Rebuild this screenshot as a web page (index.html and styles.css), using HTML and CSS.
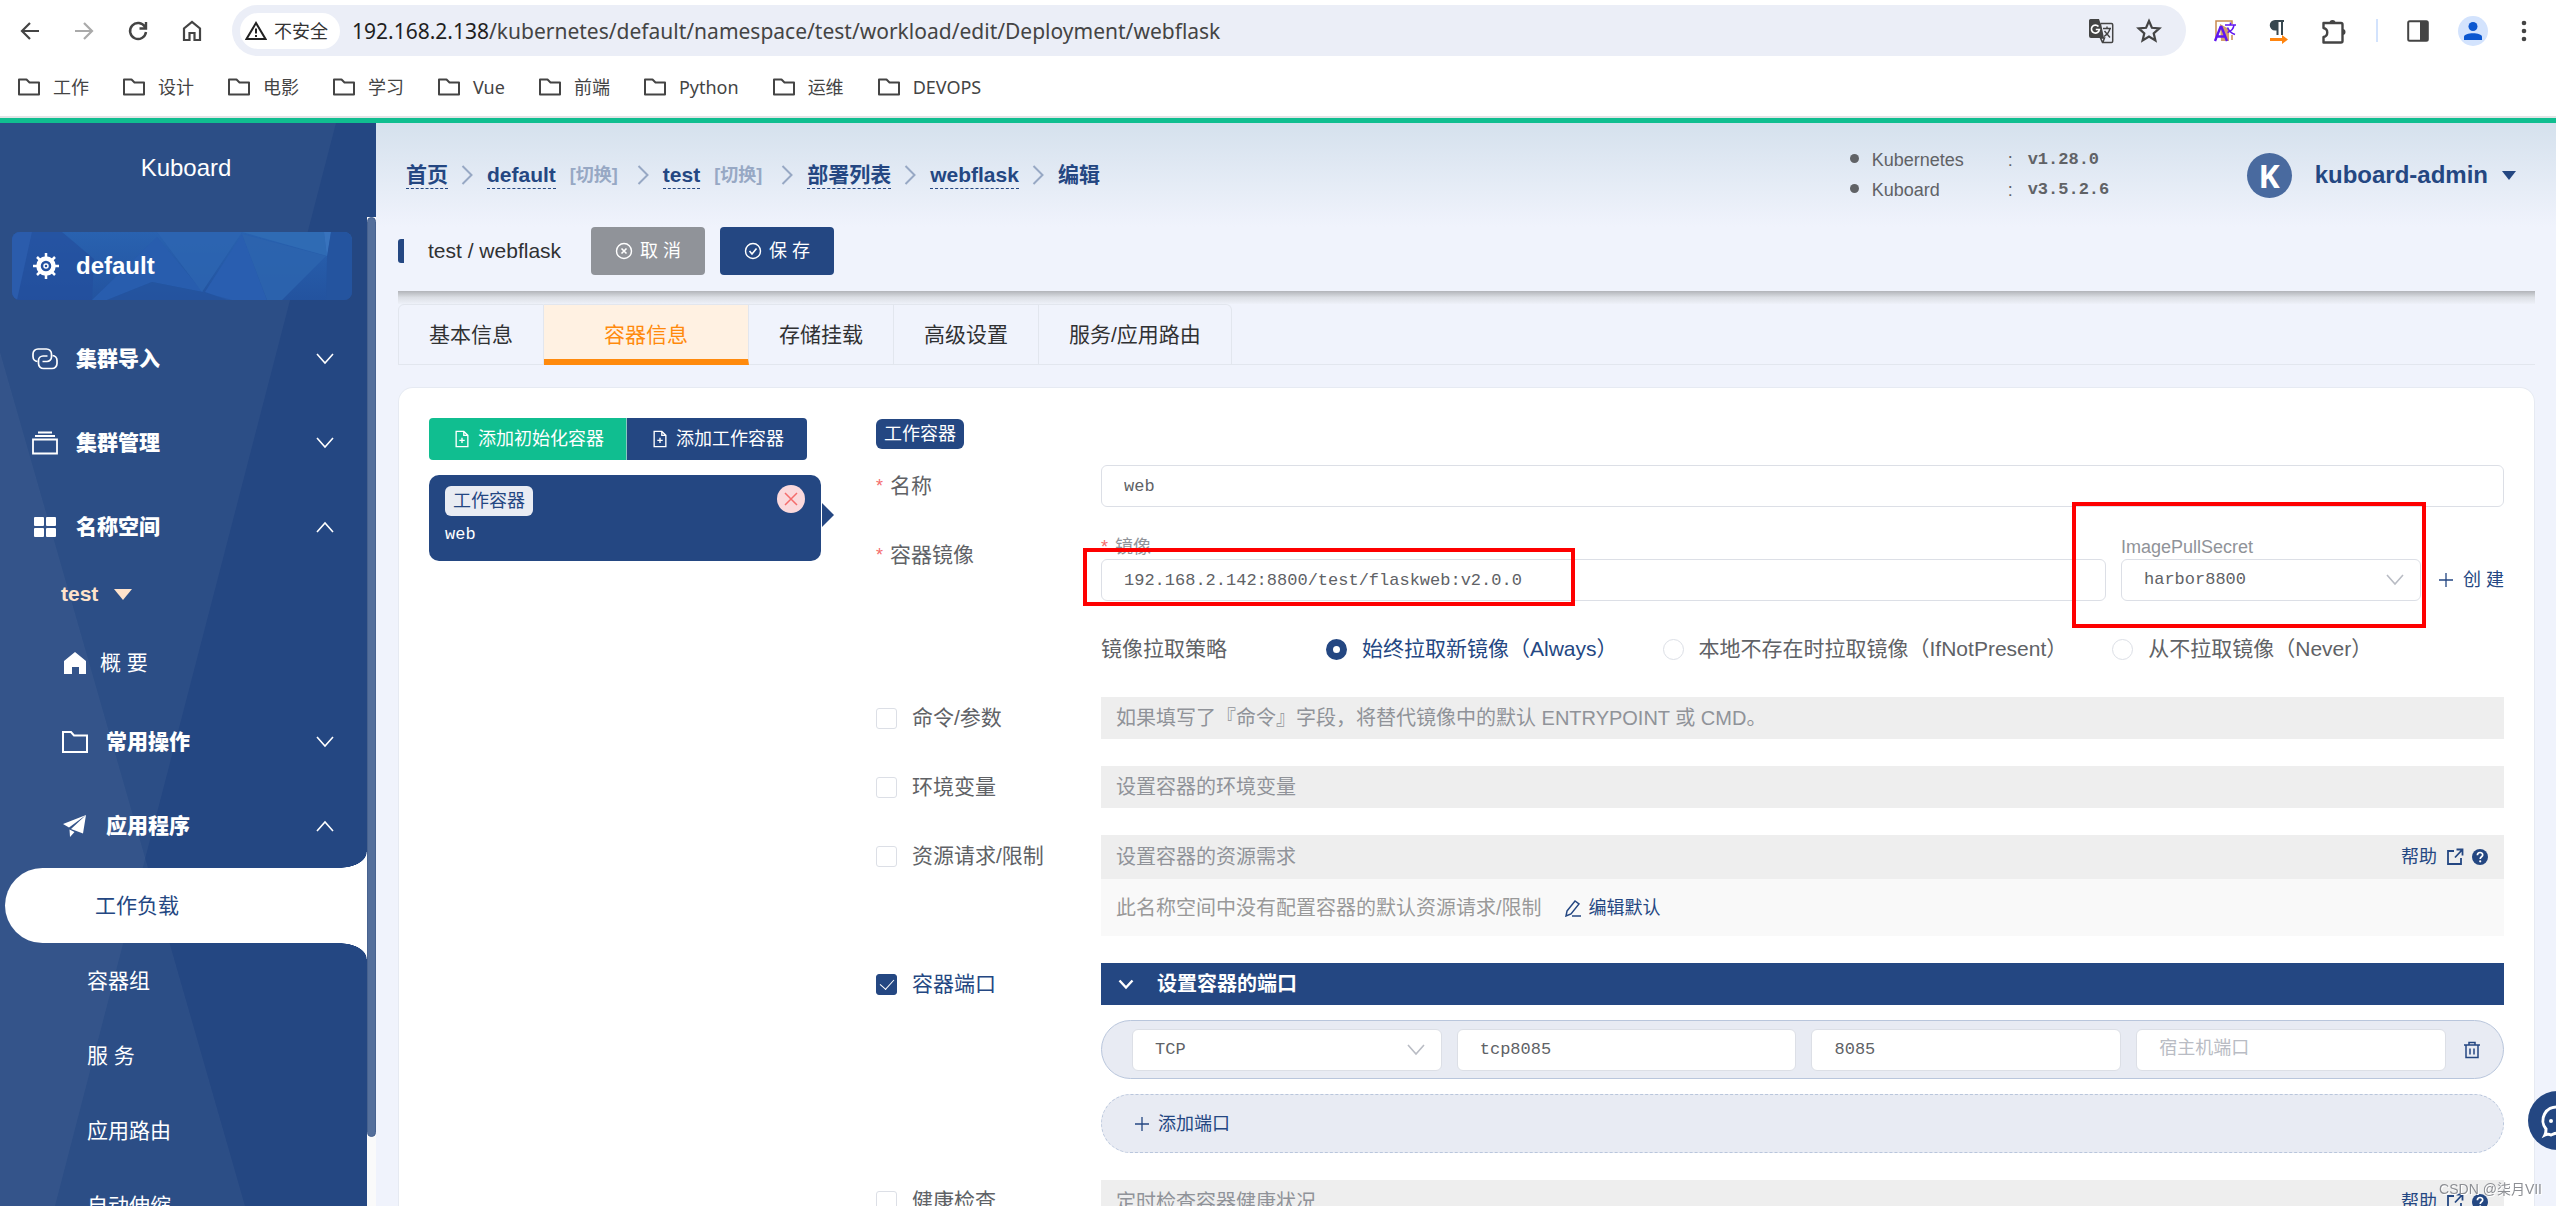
FILE: index.html
```html
<!DOCTYPE html>
<html lang="zh-CN">
<head>
<meta charset="utf-8">
<title>Kuboard</title>
<link rel="stylesheet" href="styles.css">
</head>
<body>
<svg class="sprite" aria-hidden="true">
  <symbol id="folder" viewBox="0 0 24 20"><path d="M2 17.5V2.500h7.500l3 3H22v12z" fill="none" stroke="currentColor" stroke-width="2" stroke-linejoin="round"/></symbol>
  <symbol id="down" viewBox="0 0 18 12"><path d="M1 1l8 9 8-9" fill="none" stroke="currentColor" stroke-width="1.6"/></symbol>
  <symbol id="up" viewBox="0 0 18 12"><path d="M1 11l8-9 8 9" fill="none" stroke="currentColor" stroke-width="1.600"/></symbol>
  <symbol id="next" viewBox="0 0 12 20"><path d="M1.500 1l9 9-9 9" fill="none" stroke="currentColor" stroke-width="2"/></symbol>
  <symbol id="fileadd" viewBox="0 0 16 20"><path d="M1.500 1.500h8.500l4.500 4.500v12.500h-13zM10 1.500V6h4.500M8 8.500v6M5 11.500h6" fill="none" stroke="currentColor" stroke-width="1.500"/></symbol>
  <symbol id="plus" viewBox="0 0 16 16"><path d="M8 1v14M1 8h14" fill="none" stroke="currentColor" stroke-width="1.300"/></symbol>
  <symbol id="external" viewBox="0 0 18 18"><path d="M8 3H2v13h13v-6M10.500 1.500H16.500V7.500M16 2L9 9.500" fill="none" stroke="currentColor" stroke-width="1.800"/></symbol>
  <symbol id="question" viewBox="0 0 18 18"><circle cx="9" cy="9" r="8" fill="currentColor"/><path d="M6.400 7.200c0-3.600 5.300-3.500 5.300-.3 0 1.800-2.500 1.900-2.500 4" fill="none" stroke="#fff" stroke-width="1.700"/><circle cx="9.200" cy="13.300" r="1.100" fill="#fff"/></symbol>
</svg>

<header class="browser">
  <div class="toolbar">
    <div class="nav-buttons">
      <button aria-label="后退"><svg width="22" height="22" viewBox="0 0 22 22"><path d="M20 11H3M11 3l-8 8 8 8" fill="none" stroke="#444" stroke-width="2.200"/></svg></button>
      <button aria-label="前进"><svg width="22" height="22" viewBox="0 0 22 22"><path d="M2 11h17M11 3l8 8-8 8" fill="none" stroke="#aaa" stroke-width="2.200"/></svg></button>
      <button aria-label="刷新"><svg width="22" height="22" viewBox="0 0 22 22"><path d="M18 7a8 8 0 1 0 1 5M19 2v6.500h-6.500" fill="none" stroke="#444" stroke-width="2.400"/></svg></button>
      <button aria-label="主页"><svg width="22" height="22" viewBox="0 0 22 22"><path d="M3 20V8.500L11 2l8 6.500V20h-5.500v-7h-5v7z" fill="none" stroke="#444" stroke-width="2.200"/></svg></button>
    </div>
    <div class="address">
      <span class="chip"><svg width="22" height="20" viewBox="0 0 22 20"><path d="M11 2L1.500 18h19zM11 7.500v5M11 14v2" fill="none" stroke="#222" stroke-width="2"/></svg>不安全</span>
      <span class="url"><b>192.168.2.138</b>/kubernetes/default/namespace/test/workload/edit/Deployment/webflask</span>
      <svg width="26" height="26" viewBox="0 0 26 26"><path d="M2.500 1h8.500l1.500 4.500H14L17 20H13l-.5 0H3a2 2 0 0 1-2-2V2.500A1.500 1.500 0 0 1 2.500 1z" fill="#444"/><path d="M13 5.500h10.500a1.200 1.200 0 0 1 1.200 1.200v16.500a1.200 1.200 0 0 1-1.200 1.200H15l4-4.500h-3z" fill="#ebeef7"/><path d="M12.500 5.500h11a1.200 1.200 0 0 1 1.200 1.200v16.500a1.200 1.200 0 0 1-1.200 1.200H14.500L12.500 20h4l-1.500 4" fill="none" stroke="#444" stroke-width="1.500"/><path d="M10.500 8.500a4 4 0 1 0 .9 3H7.800" fill="none" stroke="#fff" stroke-width="1.700"/><path d="M15 10.500h8M19 8.500v2M22 10.500c-1 4-3.500 6.500-6 8M16.500 13l5.500 6.500" fill="none" stroke="#444" stroke-width="1.400"/></svg>
      <svg width="26" height="26" viewBox="0 0 26 26"><path d="M13 3l2.900 6.800 7.400.6-5.600 4.900 1.700 7.200-6.400-3.900-6.400 3.900 1.700-7.200-5.600-4.900 7.400-.6z" fill="none" stroke="#444" stroke-width="2.200"/></svg>
    </div>
    <div class="extensions">
      <svg width="26" height="26" viewBox="0 0 26 26"><path d="M4 22V3h16v3M20 17v5" fill="none" stroke="#c88a50" stroke-width="1.500"/><path d="M8 6l9 5v12H9z" fill="#d2a06b"/><path d="M3 23L8.500 9h1L15 23M5 18.500h8" fill="none" stroke="#5f16f0" stroke-width="2.400"/><path d="M13 7h11M18.500 4.500V7M22 7c-.5 4-3.500 6.500-6.500 7.500M15.500 9.500c1.500 4 4.500 6 7.500 7" fill="none" stroke="#5f16f0" stroke-width="1.600"/></svg>
      <svg width="26" height="26" viewBox="0 0 26 26"><path d="M18 2H9a5 5 0 0 0 0 10.500h1.500V17h2V4H15v13h2V4h1z" fill="#37474f"/><path d="M4 20h12v-3l6 4.500-6 4.500v-3H4z" fill="#ff850f"/></svg>
      <svg width="28" height="28" viewBox="0 0 28 28"><path d="M3.500 6h17.500a1.500 1.500 0 0 1 1.500 1.500V24a1.500 1.500 0 0 1-1.500 1.500H3.500V20c5-1 5-8 0-9z" fill="none" stroke="#444" stroke-width="2.400" stroke-linejoin="round"/><path d="M9.500 6a3 3 0 0 1 6 0zM22.500 12a3 3 0 0 1 0 6z" fill="#444"/></svg>
      <i class="bar"></i>
      <svg width="24" height="24" viewBox="0 0 24 24"><rect x="2.200" y="2.200" width="19.600" height="19.600" rx="1.500" fill="none" stroke="#444" stroke-width="2"/><path d="M14 2h8v20h-8z" fill="#444"/></svg>
      <svg width="30" height="30" viewBox="0 0 30 30"><circle cx="15" cy="15" r="15" fill="#d3e3fd"/><circle cx="15" cy="10.500" r="4.500" fill="#0b57d0"/><path d="M6 24v-3c0-5 18-5 18 0v3z" fill="#0b57d0"/></svg>
      <svg width="16" height="26" viewBox="0 0 16 26"><g fill="#444"><circle cx="8" cy="5" r="2.300"/><circle cx="8" cy="13" r="2.300"/><circle cx="8" cy="21" r="2.300"/></g></svg>
    </div>
  </div>
  <nav class="bookmarks">
    <a href="#"><svg><use href="#folder"/></svg>工作</a>
    <a href="#"><svg><use href="#folder"/></svg>设计</a>
    <a href="#"><svg><use href="#folder"/></svg>电影</a>
    <a href="#"><svg><use href="#folder"/></svg>学习</a>
    <a href="#"><svg><use href="#folder"/></svg>Vue</a>
    <a href="#"><svg><use href="#folder"/></svg>前端</a>
    <a href="#"><svg><use href="#folder"/></svg>Python</a>
    <a href="#"><svg><use href="#folder"/></svg>运维</a>
    <a href="#"><svg><use href="#folder"/></svg>DEVOPS</a>
  </nav>
</header>

<div class="app">
  <aside class="sidebar">
    <svg class="facets" viewBox="0 0 376 1083" preserveAspectRatio="none" aria-hidden="true"><path d="M0 0h336L55 1083H0z" fill="#fff" fill-opacity=".04"/><path d="M0 229L245 1083H0z" fill="#fff" fill-opacity=".04"/></svg>
    <div class="brand">Kuboard</div>
    <div class="side-body">
      <nav class="menu">
        <a class="cluster" href="#">
          <svg class="cluster-art" viewBox="0 0 340 68" preserveAspectRatio="none" aria-hidden="true"><defs><linearGradient id="sky" x1="0" y1="0" x2="0" y2="1"><stop offset="0" stop-color="#2962b0"/><stop offset="1" stop-color="#23539f"/></linearGradient></defs><path d="M0 0h340v68H0z" fill="url(#sky)"/><path d="M0 0h50l32 27-2 41H0z" fill="#234f9c" fill-opacity=".7"/><path d="M20 0L5 68H0V0z" fill="#2b5cac"/><path d="M145 5l46 55-51-10-45 18-15 0z" fill="#285dae"/><path d="M145 0h85l-40 60z" fill="#2d65b2" fill-opacity=".8"/><path d="M230 2l25 66h-40l-22-8z" fill="#295eb0"/><path d="M230 2l84 22-44 44h-15z" fill="#2c64ae" fill-opacity=".9"/><path d="M230 0h82l3 24z" fill="#2f6bb4"/><path d="M312 0h7l-4 25z" fill="#3873bd"/><path d="M319 0h21v68h-26l1-43z" fill="#24549f"/><path d="M140 50l50 10 30 8H95z" fill="#25549f" fill-opacity=".6"/></svg>
          <svg class="ico" width="28" height="28" viewBox="0 0 28 28"><g stroke="#fff" fill="none"><circle cx="14" cy="14" r="7.500" stroke-width="4.500"/><circle cx="14" cy="14" r="2" stroke-width="1.500"/><path d="M14 1v5M14 22v5M1 14h5M22 14h5M5 5l3.500 3.500M19.500 19.500L23 23M23 5l-3.500 3.500M8.500 19.500L5 23" stroke-width="2.500"/></g></svg>
          <span>default</span>
        </a>
        <a class="group" href="#"><svg class="ico" width="28" height="24" viewBox="0 0 28 24"><g fill="none" stroke="#fff" stroke-width="1.700"><path d="M6.500 14.500A5 5 0 0 1 2 9.500V7a5 5 0 0 1 5-5h8.500a5 5 0 0 1 5 5v3a4.500 4.500 0 0 1-4.500 4.500h-4.500"/><path d="M21.500 8.500a5 5 0 0 1 4.500 5V16.500a5 5 0 0 1-5 5h-8.500a5 5 0 0 1-5-5v-3A4.500 4.500 0 0 1 12 9h4.500"/></g></svg><span>集群导入</span><svg class="arrow"><use href="#down"/></svg></a>
        <a class="group" href="#"><svg class="ico" width="28" height="24" viewBox="0 0 28 24"><path d="M2 8.500h24v14H2zM4 5h20M7 1.500h14" fill="none" stroke="#fff" stroke-width="1.800"/></svg><span>集群管理</span><svg class="arrow"><use href="#down"/></svg></a>
        <a class="group" href="#"><svg class="ico" width="28" height="24" viewBox="0 0 28 24"><g fill="#fff"><rect x="3" y="2" width="10" height="9" rx="1"/><rect x="15" y="2" width="10" height="9" rx="1"/><rect x="3" y="13" width="10" height="9" rx="1"/><rect x="15" y="13" width="10" height="9" rx="1"/></g></svg><span>名称空间</span><svg class="arrow"><use href="#up"/></svg></a>
        <a class="namespace" href="#"><span>test</span><svg width="18" height="11" viewBox="0 0 18 11"><path d="M0 0h18L9 11z" fill="#ffe3cb"/></svg></a>
        <a class="overview" href="#"><svg class="ico" width="28" height="24" viewBox="0 0 28 24"><path d="M14 1l11 9v13h-7v-7h-7v7H3V10z" fill="#fff"/></svg><span>概 要</span></a>
        <a class="group nested" href="#"><svg class="ico" width="28" height="24" viewBox="0 0 28 24"><path d="M2 22V2h8l3 3.500h13V22z" fill="none" stroke="#fff" stroke-width="2"/></svg><span>常用操作</span><svg class="arrow"><use href="#down"/></svg></a>
        <a class="group nested" href="#"><svg class="ico" width="28" height="24" viewBox="0 0 28 24"><path d="M25 1L2 10l6 3.500zM25 1L10 15l12 4.500zM8.500 15.500l5 2.500L9 23z" fill="#fff"/></svg><span>应用程序</span><svg class="arrow"><use href="#up"/></svg></a>
        <a class="leaf current" href="#">工作负载</a>
        <a class="leaf" href="#">容器组</a>
        <a class="leaf" href="#">服 务</a>
        <a class="leaf" href="#">应用路由</a>
        <a class="leaf" href="#">自动伸缩</a>
      </nav>
      <div class="track"><div class="thumb"></div></div>
    </div>
  </aside>

  <main class="main">
    <div class="topline">
      <nav class="crumbs">
        <a href="#">首页</a><svg class="sep"><use href="#next"/></svg>
        <a href="#">default</a><button class="switch">[切换]</button><svg class="sep after"><use href="#next"/></svg>
        <a href="#">test</a><button class="switch">[切换]</button><svg class="sep after"><use href="#next"/></svg>
        <a href="#">部署列表</a><svg class="sep"><use href="#next"/></svg>
        <a href="#">webflask</a><svg class="sep"><use href="#next"/></svg>
        <span>编辑</span>
      </nav>
      <ul class="versions">
        <li><span>Kubernetes</span><span>:</span><b>v1.28.0</b></li>
        <li><span>Kuboard</span><span>:</span><b>v3.5.2.6</b></li>
      </ul>
      <button class="user"><span class="avatar">K</span>kuboard-admin<svg width="14" height="9" viewBox="0 0 14 9"><path d="M0 0h14L7 9z" fill="#244782"/></svg></button>
    </div>

    <div class="titlebar">
      <h1>test / webflask</h1>
      <button class="btn cancel"><svg width="18" height="18" viewBox="0 0 18 18"><circle cx="9" cy="9" r="7.500" fill="none" stroke="#fff" stroke-width="1.400"/><path d="M6.500 6.500l5 5M11.500 6.500l-5 5" stroke="#fff" stroke-width="1.600"/></svg>取 消</button>
      <button class="btn save"><svg width="18" height="18" viewBox="0 0 18 18"><circle cx="9" cy="9" r="7.500" fill="none" stroke="#fff" stroke-width="1.400"/><path d="M5.500 9l2.500 3 4.500-5.500" fill="none" stroke="#fff" stroke-width="1.600"/></svg>保 存</button>
    </div>

    <div class="tabs" role="tablist">
      <button role="tab">基本信息</button>
      <button role="tab" class="active" aria-selected="true">容器信息</button>
      <button role="tab">存储挂载</button>
      <button role="tab">高级设置</button>
      <button role="tab">服务/应用路由</button>
    </div>

    <section class="panel">
      <div class="containers">
        <div class="adders">
          <button class="add-init"><svg><use href="#fileadd"/></svg>添加初始化容器</button>
          <button class="add-work"><svg><use href="#fileadd"/></svg>添加工作容器</button>
        </div>
        <div class="container-card">
          <span class="tag light">工作容器</span>
          <span class="cname">web</span>
          <button class="remove" aria-label="删除"><svg width="14" height="14" viewBox="0 0 14 14"><path d="M1 1l12 12M13 1L1 13" stroke="#f56c6c" stroke-width="1.500"/></svg></button>
        </div>
      </div>

      <form class="form">
        <div class="form-head"><span class="tag">工作容器</span></div>
        <div class="row">
          <label class="label required" for="cname">名称</label>
          <input class="input" id="cname" value="web">
        </div>
        <div class="row">
          <label class="label required" for="image">容器镜像</label>
          <div class="image-block">
            <div class="image-line">
              <div class="field image">
                <label class="sub required" for="image">镜像</label>
                <input class="input" id="image" value="192.168.2.142:8800/test/flaskweb:v2.0.0">
                <i class="mark mark-image"></i>
              </div>
              <div class="field secret">
                <label class="sub" for="secret">ImagePullSecret</label>
                <span class="select"><select class="input" id="secret"><option>harbor8800</option></select><svg><use href="#down"/></svg></span>
                <i class="mark mark-secret"></i>
              </div>
              <button type="button" class="link create"><svg class="plus"><use href="#plus"/></svg>创 建</button>
            </div>
            <div class="policy">
              <span>镜像拉取策略</span>
              <label><input type="radio" name="policy" checked><span>始终拉取新镜像（Always）</span></label>
              <label><input type="radio" name="policy"><span>本地不存在时拉取镜像（IfNotPresent）</span></label>
              <label><input type="radio" name="policy"><span>从不拉取镜像（Never）</span></label>
            </div>
          </div>
        </div>
        <div class="row">
          <label class="label check"><input type="checkbox">命令/参数</label>
          <div class="hint">如果填写了『命令』字段，将替代镜像中的默认 ENTRYPOINT 或 CMD。</div>
        </div>
        <div class="row">
          <label class="label check"><input type="checkbox">环境变量</label>
          <div class="hint">设置容器的环境变量</div>
        </div>
        <div class="row">
          <label class="label check"><input type="checkbox">资源请求/限制</label>
          <div>
            <div class="hint tall">设置容器的资源需求<a class="link help" href="#">帮助<svg><use href="#external"/></svg><svg><use href="#question"/></svg></a></div>
            <div class="note">此名称空间中没有配置容器的默认资源请求/限制<a class="link" href="#"><svg width="18" height="18" viewBox="0 0 18 18"><path d="M3 12L11 2l4 3-8 10-5 2zM8 17h9" fill="none" stroke="currentColor" stroke-width="1.500"/></svg>编辑默认</a></div>
          </div>
        </div>
        <div class="row">
          <label class="label check on"><input type="checkbox" checked>容器端口</label>
          <div class="ports">
            <div class="ports-head"><svg width="16" height="11" viewBox="0 0 16 11"><path d="M1.500 1.500L8 8.500l6.500-7" fill="none" stroke="#fff" stroke-width="2.400"/></svg>设置容器的端口</div>
            <div class="port">
              <span class="select"><select class="input" aria-label="协议"><option>TCP</option></select><svg><use href="#down"/></svg></span>
              <input class="input" aria-label="端口名称" value="tcp8085">
              <input class="input" aria-label="容器端口" value="8085">
              <input class="input" aria-label="宿主机端口" placeholder="宿主机端口">
              <button type="button" class="link trash" aria-label="删除端口"><svg width="18" height="18" viewBox="0 0 18 18"><path d="M1 4h16M6 4V1.500h6V4M3 4v12.500h12V4M7 7.500v6M11 7.500v6" fill="none" stroke="currentColor" stroke-width="1.500"/></svg></button>
            </div>
            <button type="button" class="link add-port"><svg class="plus"><use href="#plus"/></svg>添加端口</button>
          </div>
        </div>
        <div class="row">
          <label class="label check"><input type="checkbox">健康检查</label>
          <div class="hint tall">定时检查容器健康状况<a class="link help" href="#">帮助<svg><use href="#external"/></svg><svg><use href="#question"/></svg></a></div>
        </div>
      </form>
    </section>
  </main>
</div>

<button class="chat" aria-label="反馈"><svg width="36" height="36" viewBox="0 0 36 36"><path d="M18 4a14 13 0 0 1 0 26c-3 0-5 1-7 2-2-1-4-1-6 0 1-2 1-4 1-6A13.500 13.500 0 0 1 18 4z" fill="none" stroke="#fff" stroke-width="3"/><g fill="#fff"><circle cx="11" cy="18" r="2"/><circle cx="18" cy="18" r="2"/><circle cx="25" cy="18" r="2"/></g></svg></button>
<div class="watermark">CSDN @柒月VII</div>
</body>
</html>
```
FILE: styles.css
```css
* { box-sizing: border-box; }
:root {
  --blue: #244782;
  --line: #dcdfe6;
  --sans: "Liberation Sans", "Noto Sans CJK SC", sans-serif;
  --mono: "Liberation Mono", "Noto Sans CJK SC", monospace;
}
body { margin: 0; height: 100vh; overflow: hidden; display: flex; flex-direction: column; font: 21px/32px var(--sans); color: #606266; background: #f0f3fc; }
button, input, select { font: inherit; color: inherit; margin: 0; }
button { border: 0; background: none; padding: 0; display: flex; align-items: center; }
a { color: inherit; text-decoration: none; }
svg { flex: none; display: block; }
.sprite { position: absolute; width: 0; height: 0; }

/* Browser chrome */
.browser { flex: none; background: #fff; border-bottom: 2px solid #e2e4e6; padding-top: 5px; font-family: "Noto Sans", "Noto Sans CJK SC", sans-serif; color: #444; }
.toolbar { display: flex; align-items: center; height: 51px; }
.nav-buttons { display: flex; gap: 32px; width: 232px; padding-left: 19px; }
.address { flex: 1; height: 51px; border-radius: 26px; background: #ebeef7; display: flex; align-items: center; gap: 22px; padding: 0 24px 0 8px; }
.chip { height: 36px; border-radius: 18px; background: #fff; display: flex; align-items: center; gap: 7px; padding: 0 12px 0 5px; font-size: 18px; color: #333; margin-right: -10px; }
.url { flex: 1; font-size: 21px; white-space: nowrap; }
.url b { font-weight: 400; color: #1f1f1f; }
.extensions { display: flex; align-items: center; gap: 28px; padding: 0 24px 0 26px; }
.bar { width: 2px; height: 23px; background: #d3e3fd; }
.bookmarks { display: flex; gap: 33px; height: 60px; align-items: center; padding: 2px 18px 0 17px; font-size: 18px; }
.bookmarks a { display: flex; align-items: center; gap: 12px; }
.bookmarks svg { width: 24px; height: 20px; }

.app { flex: 1; min-height: 0; border-top: 5px solid #10be90; display: flex; }

/* Sidebar */
.sidebar { position: relative; flex: none; width: 376px; background: var(--blue); color: #fff; display: flex; flex-direction: column; }
.facets { position: absolute; inset: 0; width: 100%; height: 100%; }
.brand { position: relative; flex: none; height: 94px; line-height: 90px; font-size: 24px; text-align: center; padding-right: 4px; }
.side-body { position: relative; flex: 1; min-height: 0; display: flex; }
.menu { flex: 1; min-width: 0; overflow: hidden; padding-top: 15px; }
.menu > a { display: flex; align-items: center; }
.menu .cluster { position: relative; height: 68px; margin: 0 15px 17px 12px; padding: 0 20px; gap: 16px; border-radius: 8px; overflow: hidden; font-weight: 900; font-size: 24px; }
.cluster span, .cluster .ico { position: relative; }
.cluster-art { position: absolute; inset: 0; width: 100%; height: 100%; }
.group { height: 84px; padding: 0 33px 0 31px; gap: 17px; font-weight: 900; }
.group span { flex: 1; }
.group.nested { padding-left: 61px; }
.arrow { width: 18px; height: 12px; }
.namespace { height: 50px; margin-bottom: 6px; padding-left: 61px; gap: 16px; font-size: 21px; font-weight: 700; color: #ffe3cb; }
.overview { height: 75px; padding-left: 61px; gap: 11px; }
.leaf { height: 75px; padding-left: 87px; }
.leaf.current { position: relative; margin-left: 5px; padding-left: 90px; border-radius: 38px 0 0 38px; background: #fff; color: var(--blue); }
.current::before, .current::after { content: ""; position: absolute; right: 0; width: 27px; height: 16px; }
.current::before { bottom: 100%; background: radial-gradient(27px 16px at 0 0, transparent 97%, #fff 100%); }
.current::after { top: 100%; background: radial-gradient(27px 16px at 0 100%, transparent 97%, #fff 100%); }
.track { width: 9px; background: #fafafa; }
.thumb { height: 93%; border-radius: 5px; background: #546f9b; border: 1px solid #47628f; }

/* Page head */
.main { flex: 1; min-width: 0; padding: 0 21px 0 22px; background: linear-gradient(#d5e1ed, #f0f3fc 104px); display: flex; flex-direction: column; }
.topline { flex: none; display: flex; align-items: center; height: 104px; padding: 0 19px 0 8px; color: var(--blue); }
.crumbs { flex: 1; display: flex; align-items: center; font-weight: 700; white-space: nowrap; }
.crumbs > a { line-height: 26px; border-bottom: 1px dashed; }
.sep { width: 12px; height: 20px; margin: 0 14px 0 13px; color: #97a8c4; }
.sep.after { margin-left: 19px; }
.switch { margin-left: 14px; font-size: 18px; color: #97a8c4; }
.versions { margin: 0 123px 0 0; padding: 0; list-style: none; font-size: 18px; line-height: 30px; color: #606266; }
.versions li { position: relative; display: grid; grid-template-columns: 136px 20px 96px; }
.versions li::before { content: ""; position: absolute; left: -22px; top: 9px; width: 9px; height: 9px; border-radius: 50%; background: #606266; }
.versions b { font: 700 17px/30px var(--mono); }
.user { font-size: 24px; font-weight: 700; gap: 14px; }
.avatar { width: 45px; height: 45px; margin-right: 9px; border-radius: 50%; background: #496a9f; color: #fff; font: 700 32px/45px "Noto Sans", sans-serif; text-align: center; }

.titlebar { flex: none; height: 64px; display: flex; align-items: center; padding-bottom: 16px; gap: 15px; position: relative; }
.titlebar::after { content: ""; position: absolute; left: 0; right: 0; top: 100%; height: 13px; background: linear-gradient(#b2b4b9, #dcdfe5 50%, #eef1f9); }
.titlebar h1 { margin: 0 15px 0 0; padding-left: 24px; border-left: 6px solid var(--blue); border-radius: 3px; font-size: 21px; line-height: 24px; font-weight: 400; color: #303133; }
.btn { height: 48px; padding: 0 24px; gap: 7px; border-radius: 4px; color: #fff; font-size: 18px; }
.cancel { background: #909399; }
.save { background: var(--blue); }

.tabs { flex: none; display: flex; height: 61px; margin-top: 13px; border-bottom: 1px solid #e2e6ee; position: relative; }
.tabs button { height: 61px; padding: 0 30px; border: solid #e2e6ee; border-width: 1px 1px 1px 0; color: #303133; }
.tabs button:first-child { border-left-width: 1px; border-top-left-radius: 6px; }
.tabs button:last-child { border-top-right-radius: 6px; }
.tabs .active { padding: 5px 60px 0; background: #fff1e2; color: #ff8a0d; border-bottom: 6px solid #ff8a0d; }

/* Panel */
.panel { flex: 1; min-height: 0; overflow: hidden; margin-top: 22px; border: 1px solid #e6eaf2; border-bottom: 0; border-radius: 15px 15px 0 0; background: #fff; padding: 30px; display: flex; align-items: flex-start; gap: 55px; }
.containers { flex: none; width: 392px; }
.adders { display: flex; color: #fff; font-size: 18px; }
.adders button { height: 42px; padding: 0 23px 0 24px; gap: 7px; background: var(--blue); border-radius: 0 4px 4px 0; }
.adders .add-init { padding-right: 22px; background: #10be90; border-right: 1px solid #88c8c0; border-radius: 4px 0 0 4px; }
.adders svg { width: 18px; height: 18px; }
.container-card { position: relative; margin-top: 15px; height: 86px; padding: 11px 16px; border-radius: 10px; background: var(--blue); color: #fff; display: flex; flex-direction: column; align-items: flex-start; gap: 4px; }
.container-card::after { content: ""; position: absolute; left: calc(100% + 1px); top: 28px; border: solid transparent; border-width: 12px 0 12px 12px; border-left-color: var(--blue); }
.tag { display: block; width: max-content; height: 30px; padding: 0 8px; border-radius: 6px; font-size: 18px; line-height: 30px; background: var(--blue); color: #fff; }
.tag.light { background: #e9ecf3; color: var(--blue); }
.cname { font: 17px/30px var(--mono); }
.remove { position: absolute; right: 16px; top: 10px; width: 28px; height: 28px; border-radius: 50%; background: #fbd9dc; justify-content: center; }

.form { flex: 1; min-width: 0; display: grid; gap: 27px; }
.form-head { height: 20px; padding-top: 1px; }
.row { display: grid; grid-template-columns: 225px 1fr; align-items: start; }
.label { height: 42px; display: flex; align-items: center; }
.required::before { content: "*"; color: #f56c6c; font-size: 18px; margin-right: 7px; }
.input { width: 100%; height: 42px; border: 1px solid var(--line); border-radius: 6px; background: #fff; padding: 0 22px; font: 17px/24px var(--mono); color: #606266; outline: 0; appearance: none; }
.input::placeholder { color: #b9bcc4; font-size: 18px; }
.select { display: block; position: relative; }
.select svg { position: absolute; right: 17px; top: 15px; width: 18px; height: 12px; color: #b9bcc4; pointer-events: none; }
.image-block { display: grid; gap: 27px; }
.image-line { display: flex; align-items: flex-end; gap: 15px; }
.field { position: relative; }
.field.image { flex: 1; }
.field.secret { width: 300px; }
.sub { display: block; height: 25px; font-size: 18px; line-height: 26px; color: #909399; }
.link { color: var(--blue); font-size: 18px; }
.create { height: 42px; gap: 9px; margin-left: 2px; }
.plus { width: 16px; height: 16px; }
.mark { position: absolute; border: 4px solid #fe0000; pointer-events: none; }
.mark-image { left: -18px; top: 14px; width: 492px; height: 58px; }
.mark-secret { left: -49px; top: -32px; width: 354px; height: 126px; }
.policy { display: flex; height: 42px; align-items: center; white-space: nowrap; }
.policy > span { width: 225px; }
.policy label { display: flex; align-items: center; gap: 15px; margin-right: 45px; }
.policy input { appearance: none; width: 21px; height: 21px; border: 1px solid var(--line); border-radius: 50%; background: #fff; }
.policy input:checked { border: 7px solid var(--blue); }
.policy input:checked + span, .check.on { color: var(--blue); }
.check { gap: 15px; }
.check input { appearance: none; width: 21px; height: 21px; border: 1px solid var(--line); border-radius: 3px; display: grid; place-items: center; }
.check input:checked { background: var(--blue); border-color: var(--blue); }
.check input:checked::before { content: ""; width: 7px; height: 12px; margin-top: -3px; border: solid #fff; border-width: 0 1px 1px 0; transform: rotate(42deg); }
.hint { height: 42px; background: #eee; color: #909399; padding: 0 15px; display: flex; align-items: center; font-size: 20px; }
.hint.tall { height: 44px; }
.help { margin-left: auto; display: flex; align-items: center; gap: 7px; }
.help svg { width: 18px; height: 18px; }
.help svg:first-of-type { margin-left: 2px; }
.note { height: 57px; background: #f9f9f9; color: #999; padding: 0 15px; display: flex; align-items: center; gap: 22px; font-size: 20px; }
.note a { display: flex; align-items: center; gap: 7px; }
.ports { display: grid; gap: 15px; }
.ports-head { height: 42px; background: var(--blue); color: #fff; font-weight: 700; font-size: 20px; display: flex; align-items: center; gap: 23px; padding-left: 17px; }
.port, .add-port { height: 59px; border: 1px solid #b9c6dc; border-radius: 30px; background: #e8ebf3; }
.port { display: grid; grid-template-columns: 310fr 340fr 310fr 310fr 34px; align-items: center; gap: 15px; padding: 0 8px 0 30px; }
.trash { padding-left: 2px; }
.add-port { border-style: dashed; padding-left: 32px; gap: 8px; }

.chat { position: fixed; right: -31px; bottom: 56px; width: 59px; height: 59px; border-radius: 50%; background: var(--blue); justify-content: center; }
.watermark { position: fixed; right: 14px; bottom: 4px; font-size: 14px; line-height: 26px; color: #8d8f94; text-shadow: 1px 1px #fff; }
```
